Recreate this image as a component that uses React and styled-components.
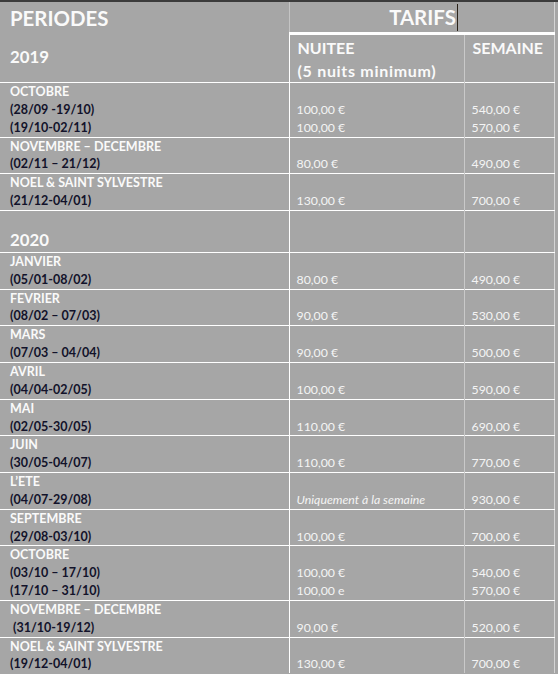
import React from "react";
import styled, { createGlobalStyle } from "styled-components";

const GlobalStyles = createGlobalStyle`
  html, body {
    margin: 0;
    padding: 0;
    background: #a6a6a6;
  }
  body {
    font-family: Lato, "Open Sans", "Liberation Sans", sans-serif;
  }
`;

const periods2019 = [
  {
    name: "OCTOBRE",
    dates: ["(28/09 -19/10)", "(19/10-02/11)"],
    nuitee: ["100,00 €", "100,00 €"],
    semaine: ["540,00 €", "570,00 €"],
  },
  { name: "NOVEMBRE – DECEMBRE", dates: ["(02/11 – 21/12)"], nuitee: ["80,00 €"], semaine: ["490,00 €"] },
  { name: "NOEL & SAINT SYLVESTRE", dates: ["(21/12-04/01)"], nuitee: ["130,00 €"], semaine: ["700,00 €"] },
];

const periods2020 = [
  { name: "JANVIER", dates: ["(05/01-08/02)"], nuitee: ["80,00 €"], semaine: ["490,00 €"] },
  { name: "FEVRIER", dates: ["(08/02 – 07/03)"], nuitee: ["90,00 €"], semaine: ["530,00 €"] },
  { name: "MARS", dates: ["(07/03 – 04/04)"], nuitee: ["90,00 €"], semaine: ["500,00 €"] },
  { name: "AVRIL", dates: ["(04/04-02/05)"], nuitee: ["100,00 €"], semaine: ["590,00 €"] },
  { name: "MAI", dates: ["(02/05-30/05)"], nuitee: ["110,00 €"], semaine: ["690,00 €"] },
  { name: "JUIN", dates: ["(30/05-04/07)"], nuitee: ["110,00 €"], semaine: ["770,00 €"] },
  { name: "L’ETE", dates: ["(04/07-29/08)"], nuitee: ["Uniquement à la semaine"], semaine: ["930,00 €"], italic: true },
  { name: "SEPTEMBRE", dates: ["(29/08-03/10)"], nuitee: ["100,00 €"], semaine: ["700,00 €"] },
  {
    name: "OCTOBRE",
    dates: ["(03/10 – 17/10)", "(17/10 – 31/10)"],
    nuitee: ["100,00 €", "100,00 e"],
    semaine: ["540,00 €", "570,00 €"],
  },
  { name: "NOVEMBRE – DECEMBRE", dates: ["\u00a0(31/10-19/12)"], nuitee: ["90,00 €"], semaine: ["520,00 €"] },
  { name: "NOEL & SAINT SYLVESTRE", dates: ["(19/12-04/01)"], nuitee: ["130,00 €"], semaine: ["700,00 €"] },
];

const PeriodRow = ({ period }) => (
  <Row>
    <PeriodCell>
      <PeriodName>{period.name}</PeriodName>
      {period.dates.map((d) => (
        <DateLine key={d}>{d}</DateLine>
      ))}
    </PeriodCell>
    <PriceCell $divider>
      {period.nuitee.map((p, i) => (
        <Price key={i} $italic={period.italic}>
          {p}
        </Price>
      ))}
    </PriceCell>
    <PriceCell>
      {period.semaine.map((p, i) => (
        <Price key={i}>{p}</Price>
      ))}
    </PriceCell>
  </Row>
);

const App = () => {
  return (
    <>
      <GlobalStyles />
      <Sheet>
        <Table>
          <colgroup>
            <col style={{ width: 289 }} />
            <col style={{ width: 175 }} />
            <col style={{ width: 90 }} />
          </colgroup>
          <thead>
            <tr>
              <TitleCell>PERIODES</TitleCell>
              <TarifsCell colSpan={2}>
                <TarifsLabel>TARIFS</TarifsLabel>
              </TarifsCell>
            </tr>
            <HeadRow>
              <YearCell>2019</YearCell>
              <ColHead $divider>
                NUITEE
                <br />
                <Note>(5 nuits minimum)</Note>
              </ColHead>
              <ColHead>SEMAINE</ColHead>
            </HeadRow>
          </thead>
          <tbody>
            {periods2019.map((p) => (
              <PeriodRow key={p.name + p.dates[0]} period={p} />
            ))}
            <Row>
              <YearCell $spaced>2020</YearCell>
              <PriceCell $divider />
              <PriceCell />
            </Row>
            {periods2020.map((p) => (
              <PeriodRow key={p.name + p.dates[0]} period={p} />
            ))}
          </tbody>
        </Table>
      </Sheet>
    </>
  );
};

const Sheet = styled.div`
  width: 558px;
  height: 674px;
  overflow: hidden;
  background: #a6a6a6;
  border-top: 2px solid #3b3b3b;
  box-sizing: border-box;
`;

const Table = styled.table`
  width: 554px;
  border-collapse: collapse;
  table-layout: fixed;
  border-right: 1px solid #d4d4d4;
  color: #fafafa;

  td,
  th {
    padding: 0;
    vertical-align: bottom;
    text-align: left;
  }
`;

const TitleCell = styled.th`
  height: 30px;
  padding: 1px 0 0 10px !important;
  font-size: 20.4px;
  font-weight: 700;
  vertical-align: middle !important;
  border-right: 1px solid #c4c4c4;
`;

const TarifsCell = styled.th`
  text-align: center !important;
  vertical-align: middle !important;
  padding: 1px 0 0 0 !important;
`;

const TarifsLabel = styled.span`
  display: inline-block;
  font-size: 20.4px;
  font-weight: 700;
  padding-right: 1px;
  border-right: 1px solid #2a2218;
  line-height: 27px;
  margin-left: 4px;
`;

const HeadRow = styled.tr`
  th {
    border-top: 3px solid #ffffff;
  }
  th:first-child {
    border-top: none;
  }
`;

const YearCell = styled.th`
  height: ${(p) => (p.$spaced ? "39px" : "47px")};
  padding: 0 0 2px 10px !important;
  font-size: 16.8px;
  font-weight: 700;
  vertical-align: ${(p) => (p.$spaced ? "bottom" : "middle")} !important;
  border-right: 1px solid #ffffff;
  border-top: ${(p) => (p.$spaced ? "1px solid #ffffff" : "none")};
`;

const ColHead = styled.th`
  height: 47px;
  box-sizing: border-box;
  padding: 1px 0 0 8px !important;
  font-size: 16px;
  font-weight: 700;
  line-height: 23px;
  white-space: nowrap;
  vertical-align: top !important;
  border-right: ${(p) => (p.$divider ? "1px solid #c9c9c9" : "none")};
`;

const Note = styled.span`
  letter-spacing: 0.7px;
`;

const Row = styled.tr`
  td, th {
    border-top: 1px solid #ffffff;
  }
`;

const PeriodCell = styled.td`
  padding-left: 10px !important;
  border-right: 1px solid #ffffff;
  font-size: 12.5px;
  font-weight: 700;
  line-height: 17.85px;
`;

const PeriodName = styled.div`
  color: #fafafa;
`;

const DateLine = styled.div`
  color: #12122a;
  white-space: pre;
`;

const PriceCell = styled.td`
  padding-left: 7px !important;
  border-right: ${(p) => (p.$divider ? "1px solid #c9c9c9" : "none")};
  font-size: 12.3px;
  line-height: 17.85px;
`;

const Price = styled.div`
  color: #f4f4f4;
  font-style: ${(p) => (p.$italic ? "italic" : "normal")};
  white-space: nowrap;
`;

export default App;
